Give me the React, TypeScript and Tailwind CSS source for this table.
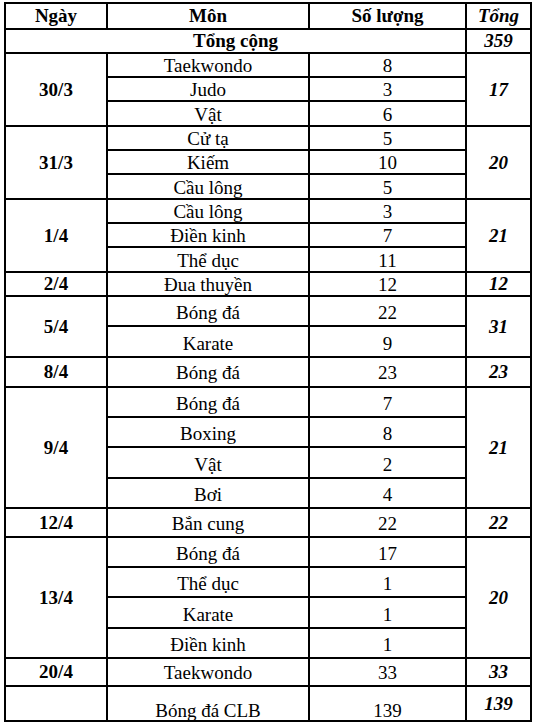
import React from "react";

type Section = {
  day: string;
  items: [string, string][];
  total: string;
  tall?: boolean;
  last?: boolean;
};

const sections: Section[] = [
  { day: "30/3", items: [["Taekwondo", "8"], ["Judo", "3"], ["Vật", "6"]], total: "17" },
  { day: "31/3", items: [["Cử tạ", "5"], ["Kiếm", "10"], ["Cầu lông", "5"]], total: "20" },
  { day: "1/4", items: [["Cầu lông", "3"], ["Điền kinh", "7"], ["Thể dục", "11"]], total: "21" },
  { day: "2/4", items: [["Đua thuyền", "12"]], total: "12" },
  { day: "5/4", items: [["Bóng đá", "22"], ["Karate", "9"]], total: "31", tall: true },
  { day: "8/4", items: [["Bóng đá", "23"]], total: "23" },
  { day: "9/4", items: [["Bóng đá", "7"], ["Boxing", "8"], ["Vật", "2"], ["Bơi", "4"]], total: "21", tall: true },
  { day: "12/4", items: [["Bắn cung", "22"]], total: "22" },
  { day: "13/4", items: [["Bóng đá", "17"], ["Thể dục", "1"], ["Karate", "1"], ["Điền kinh", "1"]], total: "20", tall: true },
  { day: "20/4", items: [["Taekwondo", "33"]], total: "33" },
  { day: "", items: [["Bóng đá CLB", "139"]], total: "139", last: true },
];

const spanClass: Record<number, string> = {
  1: "",
  2: "row-span-2",
  3: "row-span-3",
  4: "row-span-4",
};

const cell = "flex items-center justify-center border-r-2 border-b-2 border-black leading-[22px]";

function itemPad(s: Section) {
  if (s.last) return "!items-end !leading-[18px]";
  if (s.tall) return "pt-[4px]";
  return "pt-[2px]";
}

export default function App() {
  return (
    <div className="w-[535px] h-[725px] bg-white text-black overflow-hidden text-[19px] font-['Liberation_Serif','Times_New_Roman',serif] pt-[2px]">
      <div className="ml-[4px] w-[528px] border-l-2 border-t-2 border-black grid grid-cols-[102px_202px_157px_65px] grid-rows-[26px_24px_24px_24px_25px_24px_24px_25px_24px_24px_25px_24px_30px_31px_30px_30px_30px_31px_30px_29px_30px_30px_31px_30px_28px_35px]">
        <div className={`${cell} font-bold`}>Ngày</div>
        <div className={`${cell} font-bold`}>Môn</div>
        <div className={`${cell} font-bold`}>Số lượng</div>
        <div className={`${cell} font-bold italic`}>Tổng</div>

        <div className={`${cell} col-span-3 font-bold`}>Tổng cộng</div>
        <div className={`${cell} font-bold italic`}>359</div>

        {sections.map((s, si) => {
          const n = s.items.length;
          return (
            <React.Fragment key={si}>
              <div className={`${cell} col-start-1 font-bold ${spanClass[n]}`}>{s.day}</div>
              {s.items.map(([name, qty], ii) => (
                <React.Fragment key={ii}>
                  <div className={`${cell} col-start-2 ${itemPad(s)}`}>{name}</div>
                  <div className={`${cell} col-start-3 ${itemPad(s)}`}>{qty}</div>
                  {ii === 0 && (
                    <div className={`${cell} col-start-4 font-bold italic ${spanClass[n]}`}>
                      {s.total}
                    </div>
                  )}
                </React.Fragment>
              ))}
            </React.Fragment>
          );
        })}
      </div>
    </div>
  );
}
